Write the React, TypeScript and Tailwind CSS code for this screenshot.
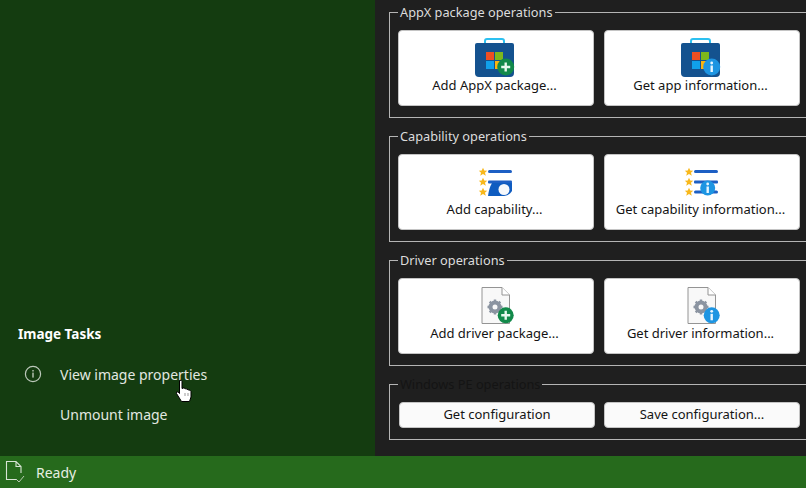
const font = "[font-family:'Noto_Sans','Open_Sans',sans-serif]";

const Badge = ({ kind, cx, cy, r }: { kind: "add" | "info"; cx: number; cy: number; r: number }) =>
  kind === "add" ? (
    <g>
      <circle cx={cx} cy={cy} r={r} fill="#12894a" />
      <path d={`M${cx - 4.5} ${cy}H${cx + 4.5}M${cx} ${cy - 4.5}V${cy + 4.5}`} stroke="#e8f8ee" strokeWidth="2.4" />
    </g>
  ) : (
    <g>
      <circle cx={cx} cy={cy} r={r} fill="#1d95e2" />
      <rect x={cx - 1.2} y={cy - 1.5} width="2.4" height="6.5" fill="#e8f6ff" />
      <circle cx={cx} cy={cy - 4} r="1.4" fill="#e8f6ff" />
    </g>
  );

const AppIcon = ({ kind }: { kind: "add" | "info" }) => (
  <svg width="40" height="40" viewBox="0 0 40 40" className="overflow-visible">
    <rect x="9" y="2" width="19" height="7" rx="2" fill="none" stroke="#2cc0f0" strokeWidth="2" />
    <path d="M1 6H36A2 2 0 0 1 38 8V36A4 4 0 0 1 34 40H3A4 4 0 0 1 -1 36V8A2 2 0 0 1 1 6Z" fill="#14528f" />
    <rect x="10" y="15" width="8" height="8" fill="#ee4f23" />
    <rect x="19" y="15" width="8" height="8" fill="#7db81c" />
    <rect x="10" y="24" width="8" height="8" fill="#10a0ea" />
    <rect x="19" y="24" width="8" height="8" fill="#fbb40f" />
    <Badge kind={kind} cx={29.7} cy={30} r={8.5} />
  </svg>
);

const Star = ({ y }: { y: number }) => (
  <path
    transform={`translate(7 ${y}) scale(1.4)`}
    d="M0 -3L.9 -1 3 -.9 1.4 .5 2 2.7 0 1.5 -2 2.7 -1.4 .5 -3 -.9 -.9 -1Z"
    fill="#f8b81c"
  />
);

const CapabilityIcon = ({ kind }: { kind: "add" | "info" }) => (
  <svg width="40" height="40" viewBox="0 0 40 40">
    <Star y={11} />
    <Star y={21} />
    <Star y={31} />
    <rect x="12" y="9" width="24" height="3" rx="1.5" fill="#1d5fc4" />
    <rect x="12" y="19.5" width="24" height="3" rx="1" fill="#1d5fc4" />
    {kind === "add" ? (
      <g>
        <path d="M16 22H36V30Q33 35 28 35H12Q13 27 16 22Z" fill="#0f5cc0" />
        <circle cx="28" cy="28.5" r="5.5" fill="#f6f8fb" />
      </g>
    ) : (
      <g>
        <rect x="12" y="29.5" width="24" height="3" rx="1.5" fill="#1d5fc4" />
        <Badge kind="info" cx={25.7} cy={27} r={7.5} />
      </g>
    )}
  </svg>
);

const DriverIcon = ({ kind }: { kind: "add" | "info" }) => (
  <svg width="40" height="40" viewBox="0 0 40 40">
    <path d="M6 2.5H26L33.5 10V38.5H6Z" fill="#f8f8f8" stroke="#949494" strokeWidth="1" />
    <path d="M26 2.5V10H33.5" fill="#fff" stroke="#949494" strokeWidth="1" />
    <circle cx="19" cy="22" r="4.5" fill="none" stroke="#8b94a1" strokeWidth="4" />
    <path
      d="M19 14.5V17M19 27V29.5M11.5 22H14M24 22H26.5M13.7 16.7L15.5 18.5M22.5 25.5L24.3 27.3M13.7 27.3L15.5 25.5M22.5 18.5L24.3 16.7"
      stroke="#8b94a1"
      strokeWidth="2.4"
    />
    <Badge kind={kind} cx={29.7} cy={30.3} r={8} />
  </svg>
);

const BigButton = ({ icon, label }: { icon: React.ReactNode; label: string }) => (
  <button className="flex h-[76px] flex-col items-center rounded-[4px] border border-[#c4c4c4] bg-white pt-[6px] text-[#141414]">
    {icon}
    <span className="-mt-px pr-[3px] text-[13px] leading-[18px]">{label}</span>
  </button>
);

const Group = ({ title, dim, children }: { title: string; dim?: boolean; children: React.ReactNode }) => (
  <fieldset className="w-[430px] border border-[#b4b4b4] pt-[10px] pl-2">
    <legend className={`h-4 px-[2px] text-[12.75px] leading-4 ${dim ? "text-[#141414]" : "text-[#dcdcdc]"}`}>{title}</legend>
    {children}
  </fieldset>
);

const rows = [
  {
    title: "AppX package operations",
    Icon: AppIcon,
    add: "Add AppX package...",
    get: "Get app information...",
  },
  {
    title: "Capability operations",
    Icon: CapabilityIcon,
    add: "Add capability...",
    get: "Get capability information...",
  },
  {
    title: "Driver operations",
    Icon: DriverIcon,
    add: "Add driver package...",
    get: "Get driver information...",
  },
];

export default function App() {
  return (
    <div className={`flex h-[488px] w-[806px] flex-col overflow-hidden ${font}`}>
      <div className="flex h-[456px]">
        {/* Left task pane */}
        <aside className="relative flex w-[375px] flex-col justify-end bg-[#143c10] pb-[22px] text-[14px] text-[#e2e8e0]">
          <div className="flex h-10 items-center pt-px pl-[18px] text-[13.5px] font-bold text-white">Image Tasks</div>
          <div className="flex h-10 items-center pl-6">
            <svg width="18" height="18" viewBox="0 0 18 18" className="mr-[18px]">
              <circle cx="9" cy="9" r="7.6" fill="none" stroke="#bcc8ba" strokeWidth="1.2" />
              <rect x="8.3" y="7.6" width="1.4" height="5" fill="#bcc8ba" />
              <rect x="8.3" y="5" width="1.4" height="1.5" fill="#bcc8ba" />
            </svg>
            View image properties
          </div>
          <div className="flex h-10 items-center pl-[60px]">Unmount image</div>
          {/* Mouse pointer */}
          <svg width="18" height="24" viewBox="0 0 18 24" className="absolute top-[379px] left-[175px]">
            <path
              d="M4.5 1.5Q6.5 .5 7 2.5V9.5L8.5 9Q10 9 10.5 10Q12 9.5 13 10.8Q15 10.5 16 12.5V18L14.5 22.5H6.5L1.5 14.5Q1 12.5 3 12.8L4.5 14.5Z"
              fill="#fff"
              stroke="#000"
              strokeWidth="1"
            />
            <path d="M10 14V17M13 14V17" stroke="#555" strokeWidth=".6" />
          </svg>
        </aside>

        {/* Operation groups */}
        <main className="flex flex-1 flex-col gap-[10px] overflow-hidden bg-[#1f1f1f] pt-1 pl-[14px]">
          {rows.map(({ title, Icon, add, get }) => (
            <Group key={title} title={title}>
              <div className="grid grid-cols-[196px_196px] gap-[10px] pb-[11px]">
                <BigButton icon={<Icon kind="add" />} label={add} />
                <BigButton icon={<Icon kind="info" />} label={get} />
              </div>
            </Group>
          ))}
          <Group title="Windows PE operations" dim>
            <div className="ml-px grid grid-cols-[196px_196px] gap-[9px] pb-[11px] text-[13px] text-[#141414]">
              <button className="h-[26px] rounded-[4px] border border-[#c4c4c4] bg-[#fafafa]">Get configuration</button>
              <button className="h-[26px] rounded-[4px] border border-[#c4c4c4] bg-[#fafafa]">Save configuration...</button>
            </div>
          </Group>
        </main>
      </div>

      {/* Status bar */}
      <footer className="flex h-8 items-center bg-[#266a1c] pl-[5px] text-[14px] text-[#e6efe2]">
        <svg width="20" height="24" viewBox="0 0 20 24" className="mr-[11px]">
          <path d="M12 19.5H1.5V1.5H11L16 6.5V13M11 1.5V6.5H16" fill="none" stroke="#d8e4d4" strokeWidth="1.1" />
          <path d="M11 19L14 22 19 16" fill="none" stroke="#b8ccb2" strokeWidth="1" />
        </svg>
        Ready
      </footer>
    </div>
  );
}
